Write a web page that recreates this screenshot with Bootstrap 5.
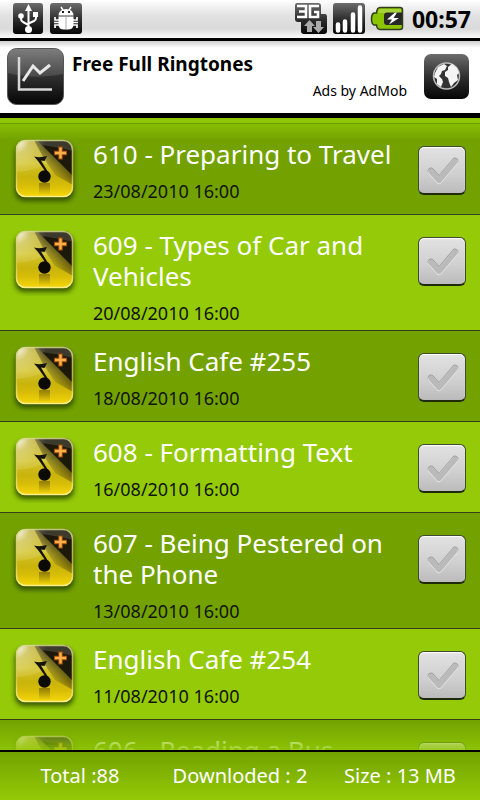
<!DOCTYPE html>
<html lang="en">
<head>
<meta charset="utf-8">
<meta name="viewport" content="width=device-width, initial-scale=1">
<title>Podcast episodes</title>
<link href="https://cdn.jsdelivr.net/npm/bootstrap@5.3.0/dist/css/bootstrap.min.css" rel="stylesheet">
<style>
body { font-family: "Noto Sans", "Open Sans", sans-serif; background: #94ca08; color: #000; }
svg { display: block; flex: none; }
.status-bar { height: 41px; padding: 0 9px 0 12px; border-bottom: 3px solid #000; background: linear-gradient(#fff 0, #e2e2e2 40%, #dadada 75%, #fafafa 100%); }
.clock { font-size: 23px; line-height: 38px; font-weight: 700; margin-left: 8px; }
.ad-banner { height: 77px; padding: 7px 10px 0 6px; border-bottom: 5px solid #000; background: linear-gradient(#d0d0d0, #fff 7px); }
.ad-title { font-size: 19px; line-height: 24px; font-weight: 700; color: #000; margin-top: 4px; }
.ad-credit { font-size: 14px; line-height: 20px; margin-top: 5px; margin-right: 8px; }
.ad-button { margin-top: 5px; }
.ad-text { padding-left: 7px; }
.episodes { padding-top: 6px; background: #8ac205; min-height: 0; }
.fade-top, .fade-bottom { left: 0; right: 0; pointer-events: none; }
.fade-top { top: 0; height: 22px; background: linear-gradient(#90c806, #90c80600); }
.fade-top::after { content: ""; display: block; height: 1px; margin-top: 5px; background: #6c9b04; }
.fade-bottom { bottom: 0; height: 30px; background: linear-gradient(#90c80600, #90c806d9); }
.episode { min-height: 91px; padding: 15px 14px 5px 9px; border-bottom: 1px solid #33401a; background: #94ca08; }
.episode:nth-child(odd) { background: #73a200; }
.episode-text { margin-left: 12px; margin-right: 16px; }
.episode-title { font-size: 26px; line-height: 31px; color: #fff; font-weight: 400; }
.episode-date { font-size: 18px; line-height: 24px; margin-top: 9px; color: #10140c; }
.tick { width: 48px; height: 49px; margin-top: 7px; }
.tick > * { grid-area: 1 / 1; }
.tick input { appearance: none; width: 48px; height: 49px; border: 1px solid #3f4a30; border-bottom: 2px solid #1e2a08; border-radius: 6px; background: linear-gradient(#e2e2e2, #cfcfcf 60%, #bbb); box-shadow: inset 0 1px 1px #fff; }
.tick svg { pointer-events: none; }
.totals { height: 50px; border-top: 2px solid #000; color: #fff; font-size: 20px; line-height: 48px; background: linear-gradient(#73a200, #94ca08); }
</style>
<script src="https://cdn.jsdelivr.net/npm/bootstrap@5.3.0/dist/js/bootstrap.bundle.min.js"></script>
</head>
<body class="d-flex flex-column vh-100 overflow-hidden">
<svg width="0" height="0" class="position-absolute" aria-hidden="true">
  <defs>
    <linearGradient id="dark" x1="0" y1="0" x2="0" y2="1"><stop offset="0" stop-color="#6c6c6c"/><stop offset=".5" stop-color="#303030"/><stop offset="1" stop-color="#050505"/></linearGradient>
    <linearGradient id="gold" x1="0" y1="0" x2="0" y2="1"><stop offset="0" stop-color="#b5a51c"/><stop offset=".4" stop-color="#d3c42c"/><stop offset=".65" stop-color="#c9b40c"/><stop offset=".8" stop-color="#d8bd08"/><stop offset="1" stop-color="#f6d808"/></linearGradient>
    <radialGradient id="sheen" cx="0" cy="0" r="1"><stop offset="0" stop-color="#fff"/><stop offset=".15" stop-color="#fff" stop-opacity=".75"/><stop offset=".4" stop-color="#fff" stop-opacity=".25"/><stop offset=".9" stop-color="#fff" stop-opacity="0"/></radialGradient>
    <linearGradient id="corner" gradientUnits="userSpaceOnUse" x1="36" y1="32" x2="48" y2="20"><stop offset="0" stop-color="#1c190b" stop-opacity="0"/><stop offset="1" stop-color="#1c190b" stop-opacity=".6"/></linearGradient>
    <linearGradient id="echo" x1="0" y1="0" x2="0" y2="1"><stop offset="0" stop-color="#5a4b00" stop-opacity=".55"/><stop offset="1" stop-color="#5a4b00" stop-opacity="0"/></linearGradient>
    <linearGradient id="rim" x1="0" y1="0" x2="0" y2="1"><stop offset="0" stop-color="#d6d890"/><stop offset=".6" stop-color="#d8c84c"/><stop offset="1" stop-color="#fdf3a0"/></linearGradient>
    <filter id="soft" x="-20%" y="-20%" width="140%" height="140%"><feGaussianBlur stdDeviation="2.5"/></filter>
    <clipPath id="tile"><rect x="7" y="1" width="57" height="57" rx="9"/></clipPath>
  </defs>
  <symbol id="note" viewBox="0 0 72 66">
    <rect x="6" y="5" width="59" height="57" rx="9" fill="#2a4400" opacity=".85" filter="url(#soft)"/>
    <g clip-path="url(#tile)">
      <rect x="7" y="1" width="57" height="57" fill="url(#gold)"/>
      <path d="M7 1H50V10Q40 31 7 33Z" fill="#fff" opacity=".12"/>
      <path d="M25 1H64V46L46 36L34 18Z" fill="url(#corner)"/>
      <path d="M28 1H64V37Z" fill="#1c190b"/>
      <path d="M28 1H64V12Q48 8 33 6Z" fill="#fff" opacity=".14"/>
      <rect x="7" y="1" width="34" height="34" fill="url(#sheen)"/>
      <path d="M30 44H41V56H30Z" fill="url(#echo)"/>
    </g>
    <rect x="7.500" y="1.500" width="56" height="56" rx="9" fill="none" stroke="url(#rim)" stroke-width="1.500" opacity=".85"/>
    <path d="M25 17.500Q31 19 38 17L35.500 22L32 21.500L39 33L37.500 34L29 22Z" fill="#15130a"/>
    <circle cx="35.500" cy="37.500" r="6.200" fill="#0b0a05"/>
    <path d="M51.500 7.500V20.500M45 14H58" stroke="#a34d08" stroke-width="4.500"/>
    <path d="M51.500 8.500V19.500M46 14H57" stroke="#f8b14a" stroke-width="2.500"/>
  </symbol>
  <symbol id="check" viewBox="0 0 48 49">
    <path d="M13 25L21 34L37 15" fill="none" stroke="#9c9c9c" stroke-width="6.500" stroke-linecap="round" stroke-linejoin="round"/>
    <path d="M13 26L21 35L37 16" fill="none" stroke="#ececec" stroke-width="6" stroke-linecap="round" stroke-linejoin="round"/>
    <path d="M13 25.500L21 34.500L37 15.500" fill="none" stroke="#bababa" stroke-width="5.500" stroke-linecap="round" stroke-linejoin="round"/>
  </symbol>
</svg>

<header class="status-bar d-flex align-items-center flex-shrink-0">
  <svg width="32" height="32" viewBox="0 0 32 32" role="img" aria-label="USB connected">
    <rect x="1" y="0" width="30" height="31" rx="3" fill="url(#dark)"/>
    <g fill="none" stroke="#fff" stroke-width="2"><path d="M16.500 5V25M9 13V16Q9 18 11 19L16.500 22M24 12V15Q24 17 22 18L16.500 20.500"/></g>
    <path d="M16.500 1L20 8H13Z" fill="#fff"/><circle cx="9" cy="13" r="2.800" fill="#fff"/><rect x="21" y="9" width="5" height="5" fill="#fff"/><circle cx="16.500" cy="26.500" r="3.500" fill="#fff"/>
  </svg>
  <svg class="ms-1" width="34" height="32" viewBox="0 0 34 32" role="img" aria-label="USB debugging">
    <rect x="2" y="0" width="32" height="31" rx="3" fill="url(#dark)"/>
    <path d="M13 4L15 7M23 4L21 7" stroke="#fff" stroke-width="1.500"/>
    <path d="M10.500 12.500Q11 6 18 6T25.500 12.500Z" fill="#fff"/><rect x="14" y="8" width="2" height="2" fill="#222"/><rect x="20" y="8" width="2" height="2" fill="#222"/>
    <path d="M10.500 13.500H25.500V22Q25 26.500 20 26.500H16Q11 26.500 10.500 22Z" fill="#fff"/><path d="M18 14V26" stroke="#aaa"/>
    <path d="M11 17H7V14M11 19.500H6M11 22H7V25M25 17H29V14M25 19.500H30M25 22H29V25" fill="none" stroke="#fff" stroke-width="1.700"/>
  </svg>
  <div class="d-flex align-items-center ms-auto">
    <svg width="34" height="32" viewBox="0 0 34 32" role="img" aria-label="3G data">
      <path d="M3 0H24Q27 0 27 3V11H31Q33 11 33 14V28Q33 31 30 31H10Q7 31 7 28V19H4Q1 19 1 16V3Q1 0 3 0Z" fill="url(#dark)"/>
      <path d="M3 3H12V14H3M5 8.500H12M25 3H16V14H24V9H20" fill="none" stroke="#fff" stroke-width="2.600"/>
      <path d="M15.500 17L21 23H18V29H13V23H10ZM22 18H27V24H30L24.500 30L19 24H22Z" fill="#aaa"/>
    </svg>
    <svg class="ms-1" width="34" height="32" viewBox="0 0 34 32" role="img" aria-label="Signal strength: full">
      <rect x="1" y="0" width="32" height="31" rx="3" fill="url(#dark)"/>
      <path d="M6 21.500V27.500M13 18.500V27.500M21 11.500V27.500M28 4.500V27.500" stroke="#fff" stroke-width="4.500" stroke-linecap="round"/>
    </svg>
    <svg class="ms-1" width="34" height="32" viewBox="0 0 34 32" role="img" aria-label="Battery charging">
      <path d="M10 4.500H30Q32.500 4.500 32.500 7V24Q32.500 26.500 30 26.500H10Q7 26.500 6.500 22H4Q1.500 21 1.500 16T4 10H6.500Q7 4.500 10 4.500Z" fill="#8bc400" stroke="#333d1c" stroke-width="1.500"/>
      <path d="M9 6H31V10H8Z" fill="#b6df5a" opacity=".6"/>
      <path d="M17 9.500H32V22H17Q14 22 14 19V12.500Q14 9.500 17 9.500Z" fill="#272727"/>
      <path d="M25 9.500L17 16.500H22L19 21.500L29 15H23.500L27 9.500Z" fill="#fff"/>
    </svg>
    <time class="clock">00:57</time>
  </div>
</header>

<aside class="ad-banner d-flex flex-shrink-0" aria-label="Advertisement">
  <svg width="59" height="58" viewBox="0 0 59 58" aria-hidden="true">
    <rect x="1.500" y=".5" width="56" height="56" rx="9" fill="url(#dark)" stroke="#555"/>
    <path d="M2 10Q2 1 10 1H49Q57 1 57 10V26Q30 32 2 25Z" fill="#fff" opacity=".12"/>
    <path d="M13 9V41.500H46" fill="none" stroke="#d8d8d8" stroke-width="2.500"/>
    <path d="M17 33L27 18L34 25L44 17" fill="none" stroke="#e8e8e8" stroke-width="3"/>
  </svg>
  <div class="ad-text d-flex flex-column flex-grow-1">
    <a href="#" class="ad-title text-decoration-none">Free Full Ringtones</a>
    <span class="ad-credit text-end">Ads by AdMob</span>
  </div>
  <button type="button" class="ad-button btn p-0 border-0 align-self-start ms-2" aria-label="Open in browser">
    <svg width="47" height="47" viewBox="0 0 47 47" aria-hidden="true">
      <rect x="1" y="1" width="45" height="45" rx="7" fill="url(#dark)"/>
      <circle cx="23.500" cy="23" r="13" fill="#333" stroke="#bcbcbc" stroke-width="1.500"/>
      <path d="M12 20L15 14L21 11L24 13L22 17L19 18L18 21L16 23L19 26L20 29L18 34L14 31L14 26L11 24ZM25 14L29 11L34 15L36 20L34 22L35 27L31 30L28 34L26 29L25 25L22 23L22 19L25 17Z" fill="#f4f4f4"/>
    </svg>
  </button>
</aside>

<main class="episodes flex-grow-1 position-relative overflow-hidden">
  <ul class="list-unstyled mb-0">
    <li class="episode d-flex align-items-start">
      <svg width="72" height="66" aria-hidden="true"><use href="#note"/></svg>
      <div class="episode-text flex-grow-1"><h2 class="episode-title mb-0" id="e1">610 - Preparing to Travel</h2><div class="episode-date">23/08/2010 16:00</div></div>
      <label class="tick d-grid"><input class="m-0" type="checkbox" aria-labelledby="e1"><svg width="48" height="49" aria-hidden="true"><use href="#check"/></svg></label>
    </li>
    <li class="episode d-flex align-items-start">
      <svg width="72" height="66" aria-hidden="true"><use href="#note"/></svg>
      <div class="episode-text flex-grow-1"><h2 class="episode-title mb-0" id="e2">609 - Types of Car and Vehicles</h2><div class="episode-date">20/08/2010 16:00</div></div>
      <label class="tick d-grid"><input class="m-0" type="checkbox" aria-labelledby="e2"><svg width="48" height="49" aria-hidden="true"><use href="#check"/></svg></label>
    </li>
    <li class="episode d-flex align-items-start">
      <svg width="72" height="66" aria-hidden="true"><use href="#note"/></svg>
      <div class="episode-text flex-grow-1"><h2 class="episode-title mb-0" id="e3">English Cafe #255</h2><div class="episode-date">18/08/2010 16:00</div></div>
      <label class="tick d-grid"><input class="m-0" type="checkbox" aria-labelledby="e3"><svg width="48" height="49" aria-hidden="true"><use href="#check"/></svg></label>
    </li>
    <li class="episode d-flex align-items-start">
      <svg width="72" height="66" aria-hidden="true"><use href="#note"/></svg>
      <div class="episode-text flex-grow-1"><h2 class="episode-title mb-0" id="e4">608 - Formatting Text</h2><div class="episode-date">16/08/2010 16:00</div></div>
      <label class="tick d-grid"><input class="m-0" type="checkbox" aria-labelledby="e4"><svg width="48" height="49" aria-hidden="true"><use href="#check"/></svg></label>
    </li>
    <li class="episode d-flex align-items-start">
      <svg width="72" height="66" aria-hidden="true"><use href="#note"/></svg>
      <div class="episode-text flex-grow-1"><h2 class="episode-title mb-0" id="e5">607 - Being Pestered on the Phone</h2><div class="episode-date">13/08/2010 16:00</div></div>
      <label class="tick d-grid"><input class="m-0" type="checkbox" aria-labelledby="e5"><svg width="48" height="49" aria-hidden="true"><use href="#check"/></svg></label>
    </li>
    <li class="episode d-flex align-items-start">
      <svg width="72" height="66" aria-hidden="true"><use href="#note"/></svg>
      <div class="episode-text flex-grow-1"><h2 class="episode-title mb-0" id="e6">English Cafe #254</h2><div class="episode-date">11/08/2010 16:00</div></div>
      <label class="tick d-grid"><input class="m-0" type="checkbox" aria-labelledby="e6"><svg width="48" height="49" aria-hidden="true"><use href="#check"/></svg></label>
    </li>
    <li class="episode d-flex align-items-start">
      <svg width="72" height="66" aria-hidden="true"><use href="#note"/></svg>
      <div class="episode-text flex-grow-1"><h2 class="episode-title mb-0" id="e7">606 - Reading a Bus</h2></div>
      <label class="tick d-grid"><input class="m-0" type="checkbox" aria-labelledby="e7"><svg width="48" height="49" aria-hidden="true"><use href="#check"/></svg></label>
    </li>
  </ul>
  <div class="fade-top position-absolute d-flex flex-column"></div>
  <div class="fade-bottom position-absolute"></div>
</main>

<footer class="totals flex-shrink-0">
  <div class="row g-0 row-cols-3 text-center">
    <div class="col text-nowrap">Total :88</div>
    <div class="col text-nowrap">Downloded : 2</div>
    <div class="col text-nowrap">Size : 13 MB</div>
  </div>
</footer>
</body>
</html>
